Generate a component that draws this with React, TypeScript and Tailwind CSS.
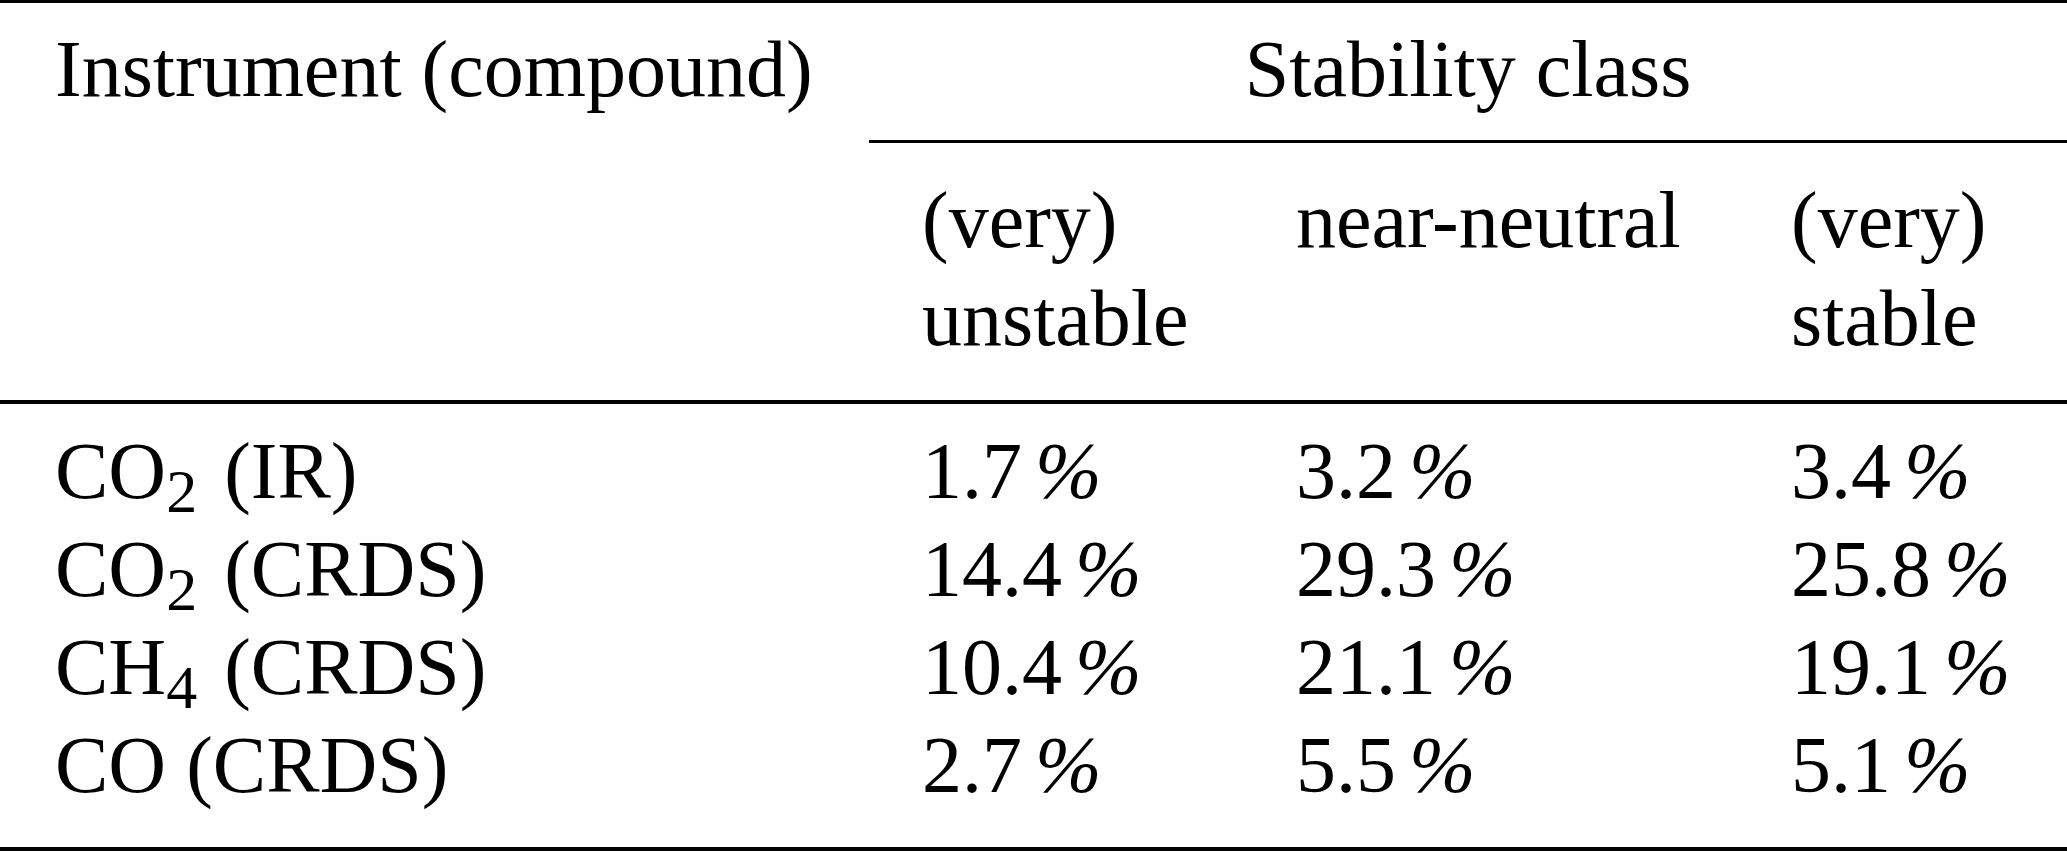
import React from "react";

type Row = { name: React.ReactNode; values: [string, string, string] };

function Sub({ children }: { children: React.ReactNode }) {
  return <span className="relative top-[14px] mr-[7px] text-[62px] leading-none">{children}</span>;
}

const rows: Row[] = [
  { name: <>CO<Sub>2</Sub> (IR)</>, values: ["1.7", "3.2", "3.4"] },
  { name: <>CO<Sub>2</Sub> (CRDS)</>, values: ["14.4", "29.3", "25.8"] },
  { name: <>CH<Sub>4</Sub> (CRDS)</>, values: ["10.4", "21.1", "19.1"] },
  { name: <>CO (CRDS)</>, values: ["2.7", "5.5", "5.1"] },
];

function Pct({ v }: { v: string }) {
  return (
    <span>
      {v}
      <span className="ml-[13px] italic">%</span>
    </span>
  );
}

export default function App() {
  return (
    <div className="w-[2067px] h-[852px] bg-white text-black font-['Liberation_Serif','Times_New_Roman',serif] text-[80px] leading-[98px] overflow-hidden">
      <div className="h-[3px] bg-black" />

      {/* header */}
      <div className="grid grid-cols-[869px_374px_495px_329px]">
        <div className="pl-[55px] pt-[17px] whitespace-nowrap">Instrument (compound)</div>
        <div className="col-span-3 pt-[17px] pb-[22px] text-center border-b-[3px] border-black">
          Stability class
        </div>

        <div />
        <div className="pl-[53px] pt-[28px] pb-[33px]">
          (very)
          <br />
          unstable
        </div>
        <div className="pl-[53px] pt-[28px] whitespace-nowrap">near-neutral</div>
        <div className="pl-[53px] pt-[28px]">
          (very)
          <br />
          stable
        </div>
      </div>

      <div className="h-[4px] bg-black" />

      {/* body */}
      <div className="grid grid-cols-[869px_374px_495px_329px] pt-[18px] pb-[33px]">
        {rows.map((r, i) => (
          <React.Fragment key={i}>
            <div className="pl-[55px] whitespace-nowrap">{r.name}</div>
            {r.values.map((v, j) => (
              <div key={j} className="pl-[53px] whitespace-nowrap">
                <Pct v={v} />
              </div>
            ))}
          </React.Fragment>
        ))}
      </div>

      <div className="h-[4px] bg-black" />
    </div>
  );
}
